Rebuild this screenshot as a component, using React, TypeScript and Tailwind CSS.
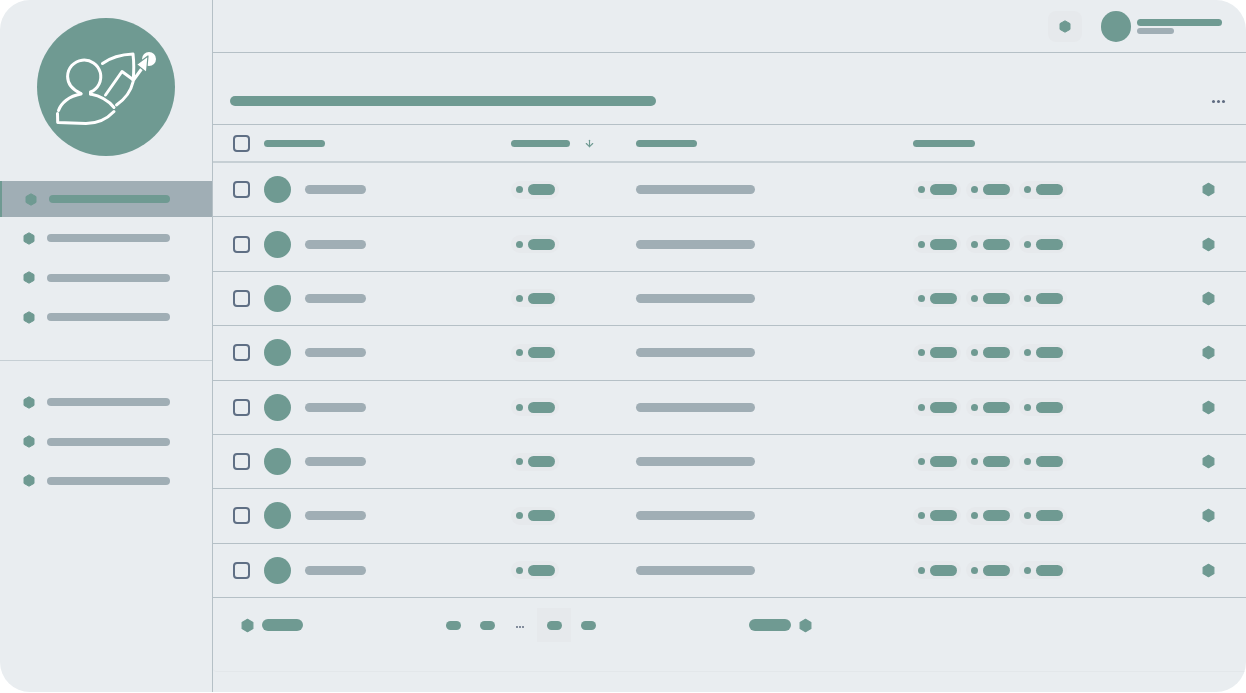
import { ArrowDown } from 'lucide-react';

const rows = [0, 1, 2, 3, 4, 5, 6, 7];
const primaryNav = [true, false, false, false];
const secondaryNav = [0, 1, 2];

function Hex({ className }: { className: string }) {
  return (
    <svg viewBox="0 0 12 13" className={className} aria-hidden="true">
      <path d="M6 .8 11 3.6v5.8L6 12.2 1 9.4V3.6z" fill="#6f9a92" stroke="#6f9a92" strokeLinejoin="round" />
    </svg>
  );
}

function Logo() {
  return (
    <svg viewBox="37 18 138 138" className="w-[138px] h-[138px]" aria-hidden="true">
      <circle cx="106" cy="87" r="69" fill="#6f9a92" />
      <g fill="none" stroke="#ffffff" strokeWidth="3" strokeLinecap="round" strokeLinejoin="round">
        <path d="M81 93.5 C73 90 67.6 84 67.6 76.5 A16.6 16.6 0 1 1 90.5 92 L90.5 94" />
        <path d="M81 94 C69 96 61 103 58.5 110.5" />
        <path d="M90.5 94 C101 96 108 100 114 107.5" />
        <path d="M114 111.5 C106 120 98 123.5 86 123.5 L57.7 122.5 L57.5 113.5" />
        <path d="M102.5 63.5 C110 58 120 54.5 133 54 C134 62 134 72 133 82 C131 91 125 99 116.5 105" />
        <path d="M105.5 95 L122 71.5 L133.5 80 L143 67" />
      </g>
      <circle cx="149" cy="59" r="7" fill="#ffffff" />
      <path d="M148 56 L146.5 72.5 L136.5 64.5 Z" fill="#ffffff" stroke="#6f9a92" strokeWidth="1.2" strokeLinejoin="round" />
    </svg>
  );
}

function NavItem({ active }: { active: boolean }) {
  return (
    <div
      className={`flex items-center h-9 gap-3 pl-[23px] pr-[42px] ${
        active ? 'bg-[#a0aeb5] border-l-2 border-[#6f9a92] pl-[21px]' : ''
      }`}
    >
      <Hex className="w-3 h-[13px] shrink-0" />
      <div className={`h-2 flex-1 rounded-full ${active ? 'bg-[#6f9a92]' : 'bg-[#a0aeb5]'}`} />
    </div>
  );
}

function Chip() {
  return (
    <div className="flex items-center gap-[5px] h-[18px] w-[48px] pl-[5px] rounded-full bg-[#e6e9ec]">
      <div className="w-[7px] h-[7px] rounded-full bg-[#6f9a92]" />
      <div className="w-[27px] h-[11px] rounded-full bg-[#6f9a92]" />
    </div>
  );
}

function Dots({ className, dot }: { className: string; dot: string }) {
  return (
    <div className={`flex items-center ${className}`}>
      <div className={`rounded-full bg-[#5f6b80] ${dot}`} />
      <div className={`rounded-full bg-[#5f6b80] ${dot}`} />
      <div className={`rounded-full bg-[#5f6b80] ${dot}`} />
    </div>
  );
}

function Checkbox() {
  return <div className="w-[17px] h-[17px] rounded-[4px] border-2 border-[#5f6f84]" />;
}

function TableRow() {
  return (
    <div className="flex-1 grid grid-cols-[278px_125px_277px_1fr] items-center pl-5 pr-[31px] border-b border-[#b5c0c6]">
      <div className="flex items-center">
        <Checkbox />
        <div className="ml-[14px] w-[27px] h-[27px] rounded-full bg-[#6f9a92]" />
        <div className="ml-[14px] w-[61px] h-[9px] rounded-full bg-[#a0aeb5]" />
      </div>
      <Chip />
      <div className="w-[119px] h-[9px] rounded-full bg-[#a0aeb5]" />
      <div className="flex items-center justify-between">
        <div className="flex gap-[5px]">
          <Chip />
          <Chip />
          <Chip />
        </div>
        <Hex className="w-[13px] h-[15px]" />
      </div>
    </div>
  );
}

export default function App() {
  return (
    <div className="w-[1246px] h-[693px] bg-white">
      <div className="flex h-[692px] rounded-[30px] overflow-hidden bg-[#e9edf0]">
        {/* Sidebar */}
        <aside className="w-[213px] shrink-0 border-r border-[#b5c0c6]">
          <div className="flex justify-center pt-[18px] pr-[1px]">
            <Logo />
          </div>
          <nav className="mt-[25px] flex flex-col gap-[3.4px] pb-[25px] border-b border-[#c6cfd4]">
            {primaryNav.map((active, i) => (
              <NavItem key={i} active={active} />
            ))}
          </nav>
          <nav className="mt-[23px] flex flex-col gap-[3.4px]">
            {secondaryNav.map((i) => (
              <NavItem key={i} active={false} />
            ))}
          </nav>
        </aside>

        <main className="flex-1 min-w-0 flex flex-col">
          {/* Top bar */}
          <header className="h-[53px] shrink-0 flex items-center justify-end pr-6 border-b border-[#b5c0c6]">
            <div className="w-[34px] h-[31px] flex items-center justify-center rounded-lg bg-[#e6e9ec]">
              <Hex className="w-3 h-[13px]" />
            </div>
            <div className="ml-[19px] w-[30px] h-[31px] rounded-full bg-[#6f9a92]" />
            <div className="ml-[6px] w-[85px] flex flex-col gap-[2px]">
              <div className="h-[7px] rounded-full bg-[#6f9a92]" />
              <div className="w-[37px] h-[6px] rounded-full bg-[#a0aeb5]" />
            </div>
          </header>

          <section className="h-[619px] shrink-0 flex flex-col border-b border-[#e3e7ea] rounded-bl-[4px]">
            {/* Title */}
            <div className="h-[72px] shrink-0 flex items-end justify-between pl-[17px] pr-[21px] pb-[18px] border-b border-[#b5c0c6]">
              <div className="w-[426px] h-[10px] rounded-full bg-[#6f9a92]" />
              <Dots className="gap-[2px] mb-[3px]" dot="w-[3px] h-[3px]" />
            </div>

            {/* Column heads */}
            <div className="h-[38px] shrink-0 grid grid-cols-[278px_125px_277px_1fr] items-center pl-5 pr-[31px] border-b-2 border-[#c6cfd4]">
              <div className="flex items-center">
                <Checkbox />
                <div className="ml-[14px] w-[61px] h-[7px] rounded-full bg-[#6f9a92]" />
              </div>
              <div className="flex items-center">
                <div className="w-[59px] h-[7px] rounded-full bg-[#6f9a92]" />
                <ArrowDown className="ml-[14px] w-[11px] h-[11px] text-[#6f9a92]" strokeWidth={2.5} />
              </div>
              <div className="w-[61px] h-[7px] rounded-full bg-[#6f9a92]" />
              <div className="w-[62px] h-[7px] rounded-full bg-[#6f9a92]" />
            </div>

            {/* Rows */}
            <div className="h-[435px] shrink-0 flex flex-col">
              {rows.map((r) => (
                <TableRow key={r} />
              ))}
            </div>

            {/* Pagination */}
            <div className="flex items-start pt-[10px] pl-7">
              <div className="flex items-center h-[34px] gap-2">
                <Hex className="w-[13px] h-[15px]" />
                <div className="w-[41px] h-3 rounded-full bg-[#6f9a92]" />
              </div>
              <div className="ml-[143px] flex items-center h-[34px]">
                <div className="w-[15px] h-[9px] rounded-full bg-[#6f9a92]" />
                <div className="ml-[19px] w-[15px] h-[9px] rounded-full bg-[#6f9a92]" />
                <Dots className="ml-[21px] gap-[1px] mt-[3px]" dot="w-[2px] h-[2px]" />
                <div className="ml-[13px] w-[34px] h-[34px] flex items-center justify-center bg-[#e6e9ec]">
                  <div className="w-[15px] h-[9px] rounded-full bg-[#6f9a92]" />
                </div>
                <div className="ml-[10px] w-[15px] h-[9px] rounded-full bg-[#6f9a92]" />
              </div>
              <div className="ml-[153px] flex items-center h-[34px] gap-2">
                <div className="w-[42px] h-3 rounded-full bg-[#6f9a92]" />
                <Hex className="w-[13px] h-[15px]" />
              </div>
            </div>
          </section>
        </main>
      </div>
    </div>
  );
}
